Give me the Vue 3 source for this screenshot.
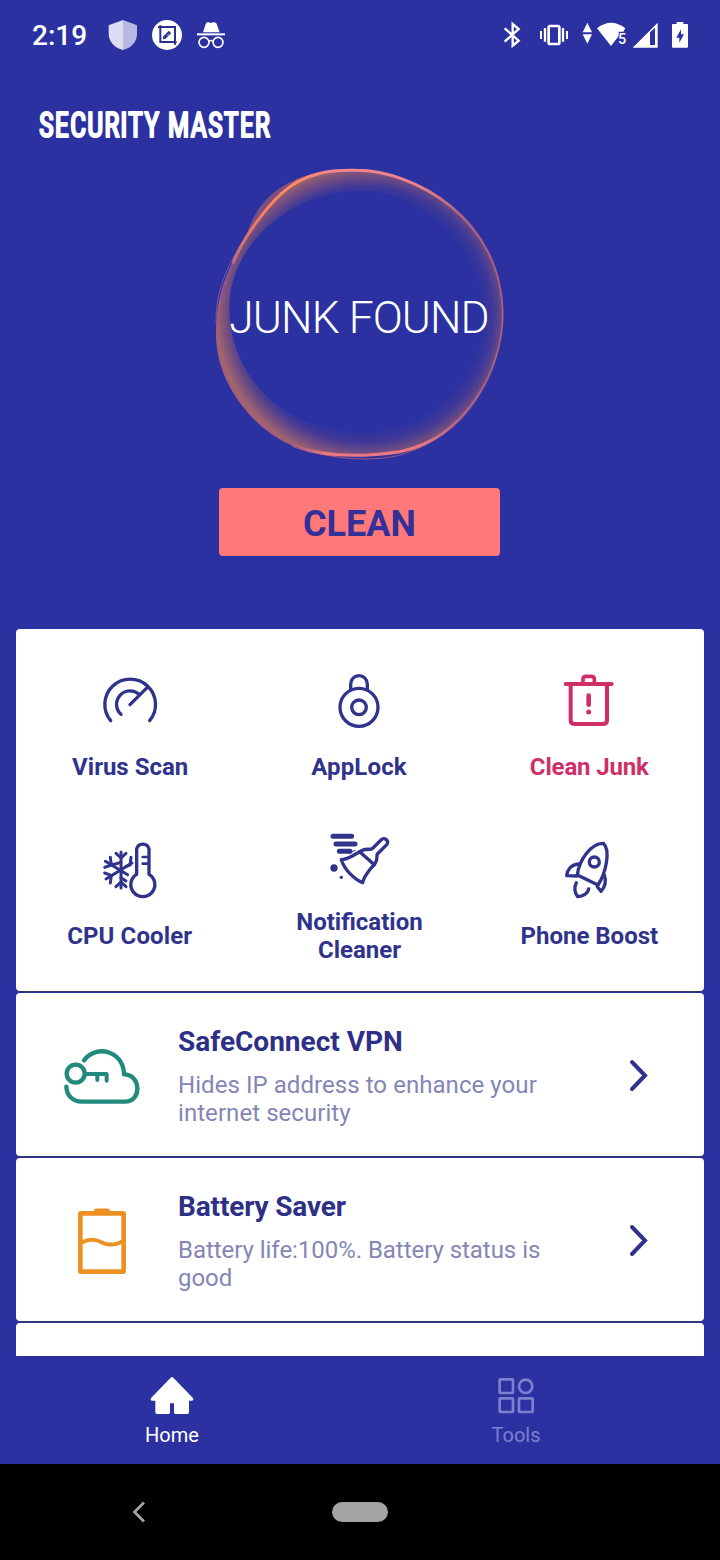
<script setup>
const features = [
  { id: 'virus', label: 'Virus Scan', view: '45 42 216 180' },
  { id: 'lock', label: 'AppLock', view: '72 42 216 180' },
  { id: 'junk', label: 'Clean Junk', view: '130 42 216 180', alert: true },
  { id: 'cpu', label: 'CPU Cooler', view: '135 70 216 180' },
  { id: 'notify', label: 'Notification Cleaner', view: '132 27 216 180' },
  { id: 'boost', label: 'Phone Boost', view: '130 69 216 180' },
]
const services = [
  { id: 'vpn', title: 'SafeConnect VPN', text: 'Hides IP address to enhance your internet security', view: '156 177 240 216' },
  { id: 'battery', title: 'Battery Saver', text: 'Battery life:100%. Battery status is good', view: '156 162 240 216' },
]
</script>

<template>
  <div class="phone">
    <main class="content">
      <div class="status">
        <span class="time">2:19</span>
        <svg class="s-left" width="30" height="32" viewBox="264 57 90 96">
          <path d="M309 60 L266 76 V101 C266 125 283 143 309 150Z" fill="#dcdcf3" />
          <path d="M309 60 L351 76 V101 C351 125 335 143 309 150Z" fill="#b9bae3" />
        </svg>
        <svg class="s-left" width="30" height="32" viewBox="396 57 90 96">
          <circle cx="441" cy="105" r="45" fill="#fff" />
          <g fill="none" stroke="#2b3090" stroke-width="6">
            <path d="M414 81H465V134M421 76V126H470" />
            <path d="M433 113L450 96" stroke-width="10" />
          </g>
          <path d="M428 118L430 108L438 116Z" fill="#2b3090" />
          <path d="M441 107L447 101" stroke="#fff" stroke-width="2" />
        </svg>
        <svg class="s-left" width="30" height="32" viewBox="528 57 90 96">
          <path d="M549 97L557 72Q559 65 566 67L573 69L580 67Q588 65 590 72L599 97Z" fill="#fff" />
          <path d="M531 103H615" stroke="#fff" stroke-width="6" />
          <g fill="none" stroke="#fff" stroke-width="5">
            <circle cx="552" cy="127" r="15" />
            <circle cx="594" cy="127" r="15" />
            <path d="M566 124Q573 119 580 124" />
          </g>
        </svg>
        <span class="grow"></span>
        <svg width="20" height="32" viewBox="36 27 60 96">
          <path d="M44 55L86 92L68 107V42L86 57L44 95" fill="none" stroke="#fff" stroke-width="7" />
        </svg>
        <svg class="vibrate" width="30" height="32" viewBox="147 27 90 96">
          <g fill="none" stroke="#fff" stroke-width="8">
            <rect x="176" y="48" width="32" height="54" rx="4" />
            <path d="M165 54V95M219 54V95" stroke-width="7" />
            <path d="M153 63V87M231 63V87" stroke-width="6" />
          </g>
        </svg>
        <svg class="wifi" width="45" height="32" viewBox="276 27 135 96">
          <g fill="#fff">
            <path d="M278 67L292 38L306 67ZM278 73H306L292 101Z" />
            <path d="M321 55Q363 22 406 55L400 65H386V78L363 108Z" />
            <text x="384" y="103" font-size="43" font-weight="500">5</text>
          </g>
        </svg>
        <svg class="signal" width="27" height="32" viewBox="426 27 81 96">
          <path fill-rule="evenodd" d="M428 113L503 38V113ZM480 67V105H495V53Z" fill="#fff" />
        </svg>
        <svg class="charge" width="18" height="32" viewBox="543 27 54 96">
          <path d="M546 44Q546 42 548 42H560V36H580V42H592Q594 42 594 44V110Q594 113 591 113H549Q546 113 546 110Z" fill="#fff" />
          <path d="M573 58L559 83H568V98L582 73H573Z" fill="#2b31a0" />
        </svg>
      </div>

      <svg class="brand" width="250" height="50" viewBox="0 0 250 50">
        <text x="3" y="37" textLength="232" lengthAdjust="spacingAndGlyphs">SECURITY MASTER</text>
      </svg>

      <svg class="orb" width="320" height="320" viewBox="0 0 960 960">
        <defs>
          <radialGradient id="glow" gradientUnits="userSpaceOnUse" cx="496" cy="478" r="445">
            <stop offset="0.78" stop-color="#b56568" stop-opacity="0" />
            <stop offset="0.86" stop-color="#b96862" stop-opacity="0.14" />
            <stop offset="0.93" stop-color="#c9705a" stop-opacity="0.42" />
            <stop offset="1" stop-color="#d87b58" stop-opacity="0.68" />
          </radialGradient>
          <linearGradient id="topRim" gradientUnits="userSpaceOnUse" x1="100" y1="0" x2="908" y2="0">
            <stop offset="0" stop-color="#c06a80" />
            <stop offset="0.12" stop-color="#ff8060" />
            <stop offset="0.22" stop-color="#ff8a60" />
            <stop offset="0.36" stop-color="#ee8890" />
            <stop offset="0.7" stop-color="#ec7f8c" />
            <stop offset="1" stop-color="#a85e84" stop-opacity="0" />
          </linearGradient>
          <linearGradient id="bottomRim" gradientUnits="userSpaceOnUse" x1="282" y1="0" x2="908" y2="0">
            <stop offset="0" stop-color="#b9657c" stop-opacity="0.6" />
            <stop offset="0.15" stop-color="#e87882" />
            <stop offset="0.6" stop-color="#ec7782" />
            <stop offset="1" stop-color="#a85e84" stop-opacity="0" />
          </linearGradient>
        </defs>
        <path fill="url(#glow)" fill-rule="evenodd" d="M100 322C128 250 196 160 246 114C315 50 400 44 470 46C640 46 908 190 908 480C908 640 800 850 600 890C480 908 370 905 282 873C160 820 56 690 50 550C49 460 65 390 100 322ZM485 107C670 107 838 270 838 475C838 670 680 830 485 830C250 830 88 665 88 455C88 280 260 107 485 107Z" />
        <path fill="#a15b72" opacity="0.7" d="M380 50C280 58 200 115 165 180C142 222 142 240 130 268L145 242C185 165 250 98 345 60Z" />
        <g fill="none" stroke-linecap="round">
          <path stroke="#82539a" stroke-width="3" d="M138 244C90 322 48 390 48 500M60 440C66 390 90 340 112 302" />
          <path stroke="#a45d7e" stroke-width="4" d="M104 314C65 390 48 460 50 550C56 690 160 820 282 873" />
          <path stroke="#9a5a80" stroke-width="3" d="M210 832C330 912 470 918 560 908C610 901 650 884 690 862" />
          <path stroke="#b0627f" stroke-width="5" d="M470 46C640 46 908 190 908 480C908 640 800 850 600 890" />
          <path stroke="#865490" stroke-width="5" d="M66 430C71 390 87 352 100 322" />
          <path stroke="url(#topRim)" stroke-width="9" d="M100 322C128 250 196 160 246 114C315 50 400 44 470 46C640 46 908 190 908 480" />
          <path stroke="url(#bottomRim)" stroke-width="9" d="M282 873C370 905 480 908 600 890C800 850 908 640 908 480" />
        </g>
        <text x="88" y="534" textLength="781">JUNK FOUND</text>
      </svg>

      <button class="clean">CLEAN</button>

      <section class="card grid">
        <div v-for="f in features" :key="f.id" class="tile" :class="{ alert: f.alert }">
          <svg width="72" height="60" :viewBox="f.view" class="line">
            <template v-if="f.id === 'virus'">
              <path d="M92 182A76 76 0 1 1 209 182" />
              <path d="M123 163A39 39 0 0 1 177 103M150 134L202 82" />
            </template>
            <template v-else-if="f.id === 'lock'">
              <circle cx="177" cy="142" r="57" />
              <circle cx="177" cy="142" r="22" />
              <path d="M152 88V72A25 25 0 0 1 202 72V88" />
            </template>
            <template v-else-if="f.id === 'junk'">
              <g stroke-width="12">
                <path d="M168 72H306M183 75V181Q183 192 194 192H281Q292 192 292 181V75" />
                <path d="M220 70V58Q220 49 229 49H245Q254 49 254 58V70" stroke-width="11" />
                <path d="M237 107V134" stroke-width="14" />
              </g>
              <circle cx="237" cy="156" r="7.5" class="solid" />
            </template>
            <template v-else-if="f.id === 'cpu'">
              <path d="M260 164V88A19 19 0 0 1 297 88V164A36 36 0 1 1 260 164Z" />
              <path d="M278 112H293M278 132H293" stroke-width="8" />
              <g stroke-width="9">
                <path d="M213 97V205M166 125L233 165M168 178L246 130" />
                <path d="M198 101L213 115L228 101M198 201L213 187L228 201M181 113L184 136L164 143M164 160L184 167L181 190M243 113L240 136M213 128L184 136M213 174L228 184M228 140L240 136" />
              </g>
            </template>
            <template v-else-if="f.id === 'notify'">
              <path d="M159 49H215M168 72H225M178 94H210" stroke-width="15" />
              <path d="M205 100L226 91" stroke-width="3" />
              <circle cx="162" cy="144" r="11" class="solid" />
              <circle cx="184" cy="172" r="5" class="solid" />
              <path d="M184 119C206 119 231 98 247 91C258 85 272 90 277 86L303 60C313 50 329 62 321 73L292 102C288 108 296 116 284 133C268 148 250 174 248 188C226 180 194 151 184 119Z" />
              <path d="M239 95L283 134" />
            </template>
            <template v-else>
              <path d="M203 165C208 121 244 69 281 70C304 91 288 160 265 195ZM206 132C184 134 173 150 171 167L203 168M284 165C292 187 282 205 274 214L263 200" />
              <circle cx="254" cy="126" r="15" />
              <path d="M200 188C190 209 198 222 204 230C220 229 235 220 237 207" />
            </template>
          </svg>
          <span class="tile-label" :class="f.id">{{ f.label }}</span>
        </div>
      </section>

      <section v-for="s in services" :key="s.id" class="card row">
        <svg width="80" height="72" :viewBox="s.view" fill="none" stroke-linecap="round" stroke-linejoin="round">
          <g v-if="s.id === 'vpn'" stroke="#22897d" stroke-width="13">
            <path d="M222 241C261 190 342 215 342 283C393 283 397 365 345 365H216C188 365 170 347 169 320" />
            <circle cx="197" cy="281" r="27" />
            <path d="M227 282H290V302M262 285V300" stroke-width="12" />
          </g>
          <g v-else stroke="#ed9022">
            <rect x="211" y="190" width="130" height="175" rx="3" stroke-width="14" />
            <path d="M258 181H294" stroke-width="11" />
            <path d="M217 277C246 260 270 275 282 280C300 287 323 283 336 275" stroke-width="12" />
          </g>
        </svg>
        <div class="copy">
          <h2 :class="s.id">{{ s.title }}</h2>
          <p :class="s.id">{{ s.text }}</p>
        </div>
        <svg width="24" height="36" viewBox="0 0 24 36">
          <path d="M5 5L18 18.5L5 32" fill="none" stroke="#30338c" stroke-width="4" stroke-linecap="round" />
        </svg>
      </section>
      <section class="card next"></section>
    </main>

    <nav class="tabs">
      <div class="tab">
        <svg width="48" height="40" viewBox="84 78 144 120">
          <path d="M152 83Q156 79 160 83L218 143Q224 151 214 152H207V187Q207 192 202 192H166Q162 192 162 187V160H150V187Q150 192 146 192H111Q106 192 106 187V152H97Q88 151 94 143Z" fill="#fff" />
        </svg>
        <span>Home</span>
      </div>
      <div class="tab dim">
        <svg width="48" height="40" viewBox="1116 78 144 120" fill="none" stroke="#7c80cd" stroke-width="8">
          <rect x="1139" y="88" width="40" height="41" rx="2" />
          <circle cx="1217" cy="109" r="20" />
          <rect x="1139" y="145" width="40" height="41" rx="2" />
          <rect x="1197" y="145" width="41" height="41" rx="2" />
        </svg>
        <span>Tools</span>
      </div>
    </nav>

    <footer class="system">
      <svg width="14" height="22" viewBox="0 0 14 22">
        <path d="M12 1.5L2.5 11L12 20.5" fill="none" stroke="#a3a3a3" stroke-width="2.8" />
      </svg>
      <span class="pill"></span>
    </footer>
  </div>
</template>

<style>
body { background: #2b31a0; }
</style>

<style scoped>
.phone {
  width: 720px;
  height: 1560px;
  display: flex;
  flex-direction: column;
  background: #2b31a0;
  font-family: Roboto, "Liberation Sans", sans-serif;
  color: #fff;
}
.phone svg { display: block; flex: none; overflow: visible; }
.content { height: 1356px; overflow: hidden; display: flex; flex-direction: column; }
.status {
  height: 70px;
  flex: none;
  display: flex;
  align-items: center;
  padding: 0 31px 0 32px;
}
.time { width: 62px; font-size: 28px; font-weight: 500; line-height: 32px; padding-top: 2px; }
.s-left { margin-left: 14px; }
.grow { flex: 1; }
.vibrate { margin-left: 17px; }
.wifi { margin-left: 13px; }
.signal { margin-left: 5px; }
.charge { margin-left: 12px; }
.brand { margin: 30px 0 0 36px; }
.brand text {
  font-size: 35px;
  font-weight: 400;
  font-stretch: 75%;
  letter-spacing: 1.2px;
  fill: #fff;
  stroke: #fff;
  stroke-width: 2.2px;
  stroke-linejoin: round;
}
.orb { margin: 5px auto 0; }
.orb text { font-size: 133px; font-weight: 300; fill: #fff; }
.clean {
  flex: none;
  width: 281px;
  height: 68px;
  margin: 13px 0 73px 219px;
  padding: 4px 0 0;
  border: 0;
  border-radius: 4px;
  background: #ff7978;
  color: #33309a;
  font: 700 36px/64px Roboto, "Liberation Sans", sans-serif;
}
.card {
  flex: none;
  margin: 0 16px 2px;
  border-radius: 4px;
  background: #fff;
  box-shadow: 0 1px 1px #343a5c;
}
.grid {
  box-sizing: border-box;
  height: 362px;
  padding: 14px 0 10px;
  display: grid;
  grid-template-columns: repeat(3, 1fr);
  grid-template-rows: repeat(2, 169px);
}
.tile {
  display: flex;
  flex-direction: column;
  align-items: center;
  justify-content: center;
  gap: 19px;
  color: #30338c;
}
.tile.alert { color: #cf2f68; }
.tile-label {
  max-width: 150px;
  text-align: center;
  font-size: 24px;
  font-weight: 700;
  line-height: 28px;
}
.tile-label.junk { letter-spacing: -0.15px; }
.tile-label.cpu { letter-spacing: 0.1px; margin-left: -2px; }
.tile-label.virus, .tile-label.notify { margin-left: -1px; }
.tile-label.lock { margin-left: -2px; letter-spacing: 0.15px; }
.line {
  fill: none;
  stroke: currentColor;
  stroke-width: 10px;
  stroke-linecap: round;
  stroke-linejoin: round;
}
.solid { fill: currentColor; stroke: none; }
.row {
  height: 163px;
  box-sizing: border-box;
  padding: 0 53px 0 46px;
  display: flex;
  align-items: center;
}
.copy { flex: 1; margin-left: 36px; padding-top: 4px; }
.copy h2 { margin: 0 0 13px; font-size: 28px; font-weight: 700; line-height: 32px; color: #2d3086; }
.copy h2.battery { letter-spacing: -0.15px; }
.copy p { margin: 0; width: 390px; font-size: 24px; line-height: 28px; color: #8486b6; }
.copy p.vpn { letter-spacing: 0.06px; }
.copy p.battery { letter-spacing: -0.04px; }
.next { height: 60px; }
.tabs { flex: none; height: 108px; display: flex; padding-right: 32px; background: #2b31a0; }
.tab {
  flex: 1;
  display: flex;
  flex-direction: column;
  align-items: center;
  padding-top: 20px;
  gap: 7px;
  font-size: 20px;
  line-height: 24px;
}
.dim { color: #7c80cd; }
.system { flex: none; height: 96px; display: flex; align-items: center; background: #000; padding-left: 132px; }
.pill { width: 56px; height: 20px; margin-left: 186px; border-radius: 10px; background: #a3a3a3; }
</style>
